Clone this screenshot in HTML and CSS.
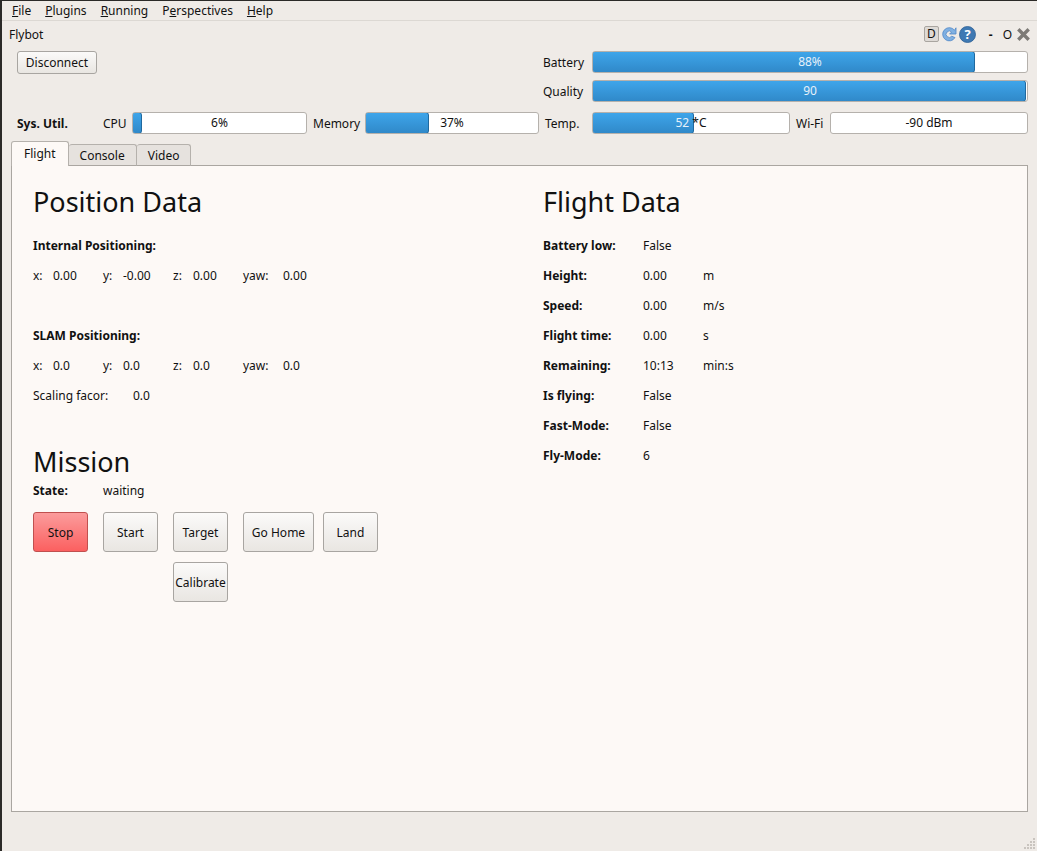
FILE: index.html
```html
<!DOCTYPE html>
<html lang="en">
  <head>
    <meta charset="UTF-8" />
    <title>Flybot</title>
    <link rel="stylesheet" href="styles.css">
  </head>
  <body>
    <div class="window">
      <nav class="menubar">
        <span class="menu"><u>F</u>ile</span>
        <span class="menu"><u>P</u>lugins</span>
        <span class="menu"><u>R</u>unning</span>
        <span class="menu">P<u>e</u>rspectives</span>
        <span class="menu"><u>H</u>elp</span>
      </nav>

      <div class="titlebar">
        <span>Flybot</span>
        <div class="title-tools">
          <span class="tool-d">D</span>
          <svg class="tool-icon" width="18" height="18" viewBox="0 0 18 18">
            <path d="M14.5 5.2A6.6 6.6 0 1 0 15 12.6L11.8 11.2A3.2 3.2 0 1 1 11.6 7L9.6 9H16V2.8Z" fill="#7fb0e2" stroke="#4f86c6" stroke-width="0.8"/>
          </svg>
          <svg class="tool-icon" width="17" height="17" viewBox="0 0 17 17">
            <circle cx="8.5" cy="8.5" r="8" fill="#3f79b3" stroke="#2d5f94" stroke-width="0.8"/>
            <text x="8.5" y="13" class="help-mark">?</text>
          </svg>
          <span class="tool-min">-</span>
          <span class="tool-o">O</span>
          <svg width="13" height="13" viewBox="0 0 13 13">
            <path d="M2.5 2.5L10.5 10.5M10.5 2.5L2.5 10.5" stroke="#7d7a76" stroke-width="3.4" stroke-linecap="square"/>
          </svg>
        </div>
      </div>

      <div class="conn-row">
        <button class="push disconnect">Disconnect</button>
        <div class="conn-bars">
          <div class="bar-row">
            <span class="bar-label">Battery</span>
            <div class="bar bar-wide">
              <div class="bar-fill" style="width: 383px"></div>
              <span class="bar-text on-fill">88%</span>
            </div>
          </div>
          <div class="bar-row">
            <span class="bar-label">Quality</span>
            <div class="bar bar-wide">
              <div class="bar-fill" style="width: 100%"></div>
              <span class="bar-text on-fill">90</span>
            </div>
          </div>
        </div>
      </div>

      <div class="sys-row">
        <b class="sys-title">Sys. Util.</b>
        <span class="sys-label cpu-label">CPU</span>
        <div class="bar bar-cpu">
          <div class="bar-fill" style="width: 10px"></div>
          <span class="bar-text">6%</span>
        </div>
        <span class="sys-label mem-label">Memory</span>
        <div class="bar bar-mem">
          <div class="bar-fill" style="width: 64px"></div>
          <span class="bar-text">37%</span>
        </div>
        <span class="sys-label temp-label">Temp.</span>
        <div class="bar bar-temp">
          <div class="bar-fill" style="width: 102px"></div>
          <span class="bar-text temp-text"><span class="temp-num">52 </span>*C</span>
        </div>
        <span class="sys-label wifi-label">Wi-Fi</span>
        <div class="bar bar-wifi">
          <span class="bar-text">-90 dBm</span>
        </div>
      </div>

      <div class="tabs">
        <span class="tab tab-active">Flight</span>
        <span class="tab">Console</span>
        <span class="tab">Video</span>
      </div>

      <main class="pane">
        <section class="col-left">
          <h1 class="heading">Position Data</h1>
          <div class="row"><b>Internal Positioning:</b></div>
          <div class="row">
            <span class="key">x:</span><span class="val">0.00</span>
            <span class="key">y:</span><span class="val">-0.00</span>
            <span class="key">z:</span><span class="val">0.00</span>
            <span class="key key-yaw">yaw:</span><span class="val">0.00</span>
          </div>
          <div class="row"></div>
          <div class="row"><b>SLAM Positioning:</b></div>
          <div class="row">
            <span class="key">x:</span><span class="val">0.0</span>
            <span class="key">y:</span><span class="val">0.0</span>
            <span class="key">z:</span><span class="val">0.0</span>
            <span class="key key-yaw">yaw:</span><span class="val">0.0</span>
          </div>
          <div class="row">
            <span class="key-scale">Scaling facor:</span><span>0.0</span>
          </div>

          <h1 class="heading mission">Mission</h1>
          <div class="state-row">
            <b class="state-key">State:</b><span class="state-val">waiting</span>
          </div>
          <div class="mission-btns">
            <button class="push big stop">Stop</button>
            <button class="push big">Start</button>
            <button class="push big">Target</button>
            <button class="push big home">Go Home</button>
            <button class="push big">Land</button>
          </div>
          <div class="mission-btns second">
            <button class="push big">Calibrate</button>
          </div>
        </section>

        <section class="col-right">
          <h1 class="heading">Flight Data</h1>
          <div class="row"><b class="fkey">Battery low:</b><span class="fval">False</span></div>
          <div class="row"><b class="fkey">Height:</b><span class="fval">0.00</span><span>m</span></div>
          <div class="row"><b class="fkey">Speed:</b><span class="fval">0.00</span><span>m/s</span></div>
          <div class="row"><b class="fkey">Flight time:</b><span class="fval">0.00</span><span>s</span></div>
          <div class="row"><b class="fkey">Remaining:</b><span class="fval">10:13</span><span>min:s</span></div>
          <div class="row"><b class="fkey">Is flying:</b><span class="fval">False</span></div>
          <div class="row"><b class="fkey">Fast-Mode:</b><span class="fval">False</span></div>
          <div class="row"><b class="fkey">Fly-Mode:</b><span class="fval">6</span></div>
        </section>
      </main>

      <svg class="grip" width="12" height="12" viewBox="0 0 12 12" fill="#c9c4bf">
        <rect x="9" y="0" width="2" height="2"/>
        <rect x="6" y="3" width="2" height="2"/><rect x="9" y="3" width="2" height="2"/>
        <rect x="3" y="6" width="2" height="2"/><rect x="6" y="6" width="2" height="2"/><rect x="9" y="6" width="2" height="2"/>
        <rect x="0" y="9" width="2" height="2"/><rect x="3" y="9" width="2" height="2"/><rect x="6" y="9" width="2" height="2"/><rect x="9" y="9" width="2" height="2"/>
      </svg>
    </div>
  </body>
</html>
```
FILE: styles.css
```css
html,
body {
  margin: 0;
  height: 100%;
  overflow: hidden;
  background: #2b2a28;
}
.window {
  position: relative;
  height: 850px;
  margin: 1px 0 0 2px;
  background: #efebe7;
  color: #111;
  font-family: "Noto Sans", sans-serif;
  font-size: 12px;
  overflow: hidden;
}
b {
  font-weight: 700;
}

/* menu */
.menubar {
  display: flex;
  gap: 14px;
  height: 19px;
  padding-left: 10px;
  align-items: center;
  border-bottom: 1px solid #dcd8d3;
}

/* dock title */
.titlebar {
  display: flex;
  justify-content: space-between;
  align-items: center;
  height: 26px;
  padding: 0 7px;
}
.title-tools {
  display: flex;
  align-items: center;
}
.tool-d {
  width: 13px;
  height: 14px;
  line-height: 14px;
  text-align: center;
  border: 1px solid #a9a5a0;
  border-radius: 2px;
  background: #dedad6;
}
.tool-icon {
  margin-left: 1px;
}
.help-mark {
  fill: #fff;
  font-size: 13px;
  font-weight: 700;
  text-anchor: middle;
}
.tool-min {
  margin: 0 10px 0 13px;
  font-weight: 700;
}
.tool-o {
  margin-right: 5px;
}

/* buttons */
.push {
  padding: 0;
  border: 1px solid #a8a5a1;
  border-radius: 3px;
  background: linear-gradient(#fbfaf9, #e9e6e2);
  color: #111;
  font: inherit;
}
.disconnect {
  width: 80px;
  height: 23px;
  margin-left: 15px;
}

/* progress bars */
.bar {
  position: relative;
  height: 22px;
  box-sizing: border-box;
  border: 1px solid #b5b1ac;
  border-radius: 3px;
  background: #fff;
  text-align: center;
  line-height: 20px;
  overflow: hidden;
}
.bar-fill {
  position: absolute;
  top: -1px;
  left: -1px;
  bottom: -1px;
  box-sizing: border-box;
  border: 1px solid #20699f;
  border-radius: 3px;
  background: linear-gradient(#3ea5ea, #3089c9);
}
.bar-text {
  position: relative;
}
.on-fill {
  color: #e6f1fa;
}
.conn-row {
  display: flex;
  justify-content: space-between;
  height: 65px;
  padding-top: 4px;
  box-sizing: border-box;
}
.conn-bars {
  display: flex;
  flex-direction: column;
  gap: 7px;
  margin-right: 9px;
}
.bar-row {
  display: flex;
  align-items: center;
}
.bar-label {
  width: 49px;
}
.bar-wide {
  width: 436px;
}
.sys-row {
  display: flex;
  align-items: center;
  height: 22px;
  padding-left: 15px;
}
.sys-title {
  width: 86px;
}
.cpu-label {
  width: 29px;
}
.bar-cpu {
  width: 175px;
}
.mem-label {
  margin-left: 6px;
  width: 52px;
}
.bar-mem {
  width: 174px;
}
.temp-label {
  margin-left: 6px;
  width: 47px;
}
.bar-temp {
  width: 198px;
}
.temp-text {
  white-space: pre;
}
.temp-num {
  color: #e6f1fa;
}
.wifi-label {
  margin-left: 6px;
  width: 34px;
}
.bar-wifi {
  width: 198px;
}

/* tabs */
.tabs {
  display: flex;
  align-items: flex-end;
  height: 25px;
  margin: 7px 0 -1px 9px;
  position: relative;
}
.tab {
  height: 22px;
  line-height: 22px;
  padding: 0 11px;
  border: 1px solid #b5b1ac;
  border-bottom: 1px solid #aaa6a1;
  border-left-width: 0;
  border-radius: 3px 3px 0 0;
  background: #e6e2de;
  box-sizing: border-box;
}
.tab-active {
  height: 25px;
  line-height: 24px;
  padding: 0 12px;
  border-left-width: 1px;
  border-bottom: 0;
  background: #fdf9f6;
}

/* content */
.pane {
  display: flex;
  height: 647px;
  margin: 0 9px 0 9px;
  box-sizing: border-box;
  border: 1px solid #aaa6a1;
  background: #fdf9f6;
  padding: 21px 21px 0;
}
.col-left {
  width: 510px;
}
.heading {
  height: 30px;
  margin: 0 0 13px;
  font-size: 27px;
  font-weight: 400;
  line-height: 30px;
}
.row {
  display: flex;
  align-items: center;
  height: 30px;
}
.key {
  width: 20px;
}
.val {
  width: 50px;
}
.key-yaw {
  width: 40px;
}
.key-scale {
  width: 100px;
}
.mission {
  margin: 37px 0 3px;
}
.state-row {
  display: flex;
  height: 20px;
  align-items: center;
}
.state-key {
  width: 70px;
}
.mission-btns {
  display: flex;
  gap: 15px;
  margin-top: 12px;
}
.mission-btns .home + .big {
  margin-left: -6px;
}
.second {
  margin-top: 10px;
  padding-left: 140px;
}
.big {
  width: 55px;
  height: 40px;
}
.home {
  width: 71px;
}
.stop {
  border-color: #c0504f;
  background: linear-gradient(#fb9c9c, #fb6060);
}
.fkey {
  width: 100px;
}
.fval {
  width: 60px;
}
.grip {
  position: absolute;
  right: 1px;
  bottom: 1px;
}
```
